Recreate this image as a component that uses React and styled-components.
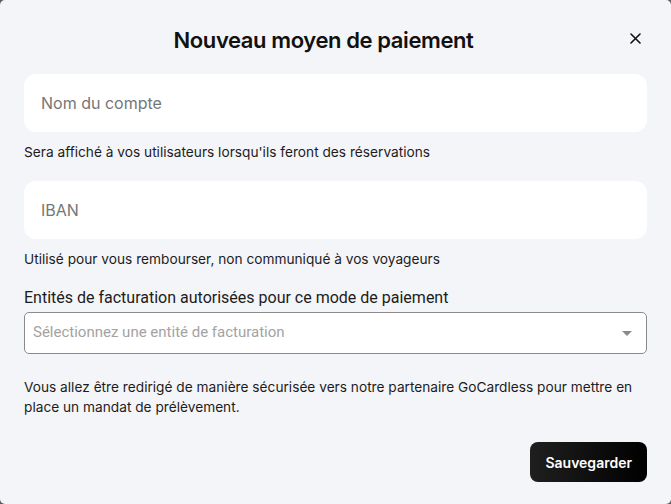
import React from "react";
import styled, { createGlobalStyle } from "styled-components";

const Global = createGlobalStyle`
  html, body { margin: 0; padding: 0; background: #5c5c5c; }
  body { font-family: Inter, "Liberation Sans", sans-serif; color: #1c1c1c; }
  * { box-sizing: border-box; }
`;

const Dialog = styled.div`
  width: 671px;
  height: 504px;
  background: #f4f5f9;
  border-radius: 5px;
  padding: 24px 24px 22px 24px;
  display: flex;
  flex-direction: column;
`;

const Header = styled.div`
  display: flex;
  align-items: center;
  height: 32px;
`;

const Title = styled.h1`
  flex: 1;
  margin: 0;
  text-align: center;
  font-family: Inter, "Noto Sans", sans-serif;
  font-size: 22px;
  font-weight: 600;
  letter-spacing: -0.4px;
  line-height: 32px;
  color: #111;
`;

const CloseButton = styled.button`
  width: 24px;
  height: 24px;
  margin-top: -3px;
  padding: 0;
  border: none;
  background: transparent;
  display: flex;
  align-items: center;
  justify-content: center;
  cursor: pointer;
`;

const TextInput = styled.input`
  margin-top: ${(p) => p.$top}px;
  width: 100%;
  height: 58px;
  border: none;
  outline: none;
  border-radius: 12px;
  background: #fff;
  padding: 0 17px;
  font-family: Inter, sans-serif;
  font-size: 16px;
  color: #222;
  &::placeholder { color: #767676; }
`;

const Helper = styled.p`
  margin: 10px 0 0;
  font-size: 13.7px;
  line-height: 20px;
  color: #1c1c1c;
`;

const Label = styled.label`
  margin-top: 18px;
  font-family: Roboto, sans-serif;
  font-size: 16px;
  line-height: 22px;
  color: #1c1c1c;
`;

const Select = styled.div`
  margin-top: 3px;
  height: 42px;
  border: 1px solid #8a8a8a;
  border-radius: 5px;
  background: #fff;
  display: flex;
  align-items: center;
  justify-content: space-between;
  padding: 0 14px 0 8px;
`;

const Placeholder = styled.span`
  font-family: Roboto, sans-serif;
  font-size: 15px;
  color: #a3a3a3;
  margin-top: -2px;
`;

const Notice = styled.p`
  margin: 23px 0 0;
  font-size: 13.7px;
  line-height: 20px;
  color: #1c1c1c;
`;

const Footer = styled.div`
  margin-top: auto;
  display: flex;
  justify-content: flex-end;
`;

const SaveButton = styled.button`
  height: 40px;
  padding: 0 15px;
  border: none;
  border-radius: 8px;
  background: linear-gradient(90deg, #1f1f1f, #000);
  color: #fff;
  font-family: Inter, sans-serif;
  font-size: 14px;
  font-weight: 600;
  cursor: pointer;
`;

export default function App() {
  return (
    <>
      <Global />
      <Dialog>
        <Header>
          <Title>Nouveau moyen de paiement</Title>
          <CloseButton aria-label="Fermer">
            <svg width="11" height="11" viewBox="0 0 11 11">
              <path d="M1 1 L10 10 M10 1 L1 10" stroke="#111" strokeWidth="1.6" strokeLinecap="round" />
            </svg>
          </CloseButton>
        </Header>
        <TextInput $top={18} placeholder="Nom du compte" />
        <Helper>Sera affiché à vos utilisateurs lorsqu'ils feront des réservations</Helper>
        <TextInput $top={19} placeholder="IBAN" />
        <Helper>Utilisé pour vous rembourser, non communiqué à vos voyageurs</Helper>
        <Label>Entités de facturation autorisées pour ce mode de paiement</Label>
        <Select>
          <Placeholder>Sélectionnez une entité de facturation</Placeholder>
          <svg width="10" height="5" viewBox="0 0 10 5">
            <path d="M0 0 L10 0 L5 5 Z" fill="#8a8a8a" />
          </svg>
        </Select>
        <Notice>
          Vous allez être redirigé de manière sécurisée vers notre partenaire GoCardless pour mettre en
          place un mandat de prélèvement.
        </Notice>
        <Footer>
          <SaveButton>Sauvegarder</SaveButton>
        </Footer>
      </Dialog>
    </>
  );
}
